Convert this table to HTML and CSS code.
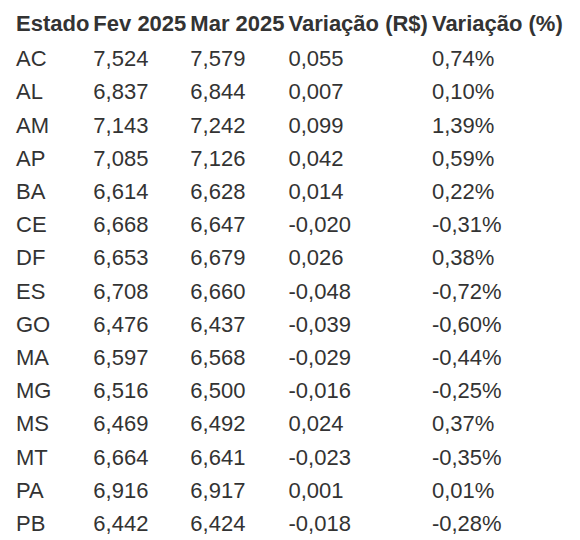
FILE: index.html
```html
<!DOCTYPE html>
<html lang="pt-BR">
<head>
    <meta charset="UTF-8">
    <meta name="viewport" content="width=device-width, initial-scale=1.0">
    <title>Preço médio por estado</title>
    <link rel="stylesheet" href="styles.css">
</head>
<body>
    <table class="price-table">
        <thead>
            <tr>
                <th>Estado</th>
                <th>Fev 2025</th>
                <th>Mar 2025</th>
                <th>Variação (R$)</th>
                <th>Variação (%)</th>
            </tr>
        </thead>
        <tbody>
            <tr><td>AC</td><td>7,524</td><td>7,579</td><td>0,055</td><td>0,74%</td></tr>
            <tr><td>AL</td><td>6,837</td><td>6,844</td><td>0,007</td><td>0,10%</td></tr>
            <tr><td>AM</td><td>7,143</td><td>7,242</td><td>0,099</td><td>1,39%</td></tr>
            <tr><td>AP</td><td>7,085</td><td>7,126</td><td>0,042</td><td>0,59%</td></tr>
            <tr><td>BA</td><td>6,614</td><td>6,628</td><td>0,014</td><td>0,22%</td></tr>
            <tr><td>CE</td><td>6,668</td><td>6,647</td><td>-0,020</td><td>-0,31%</td></tr>
            <tr><td>DF</td><td>6,653</td><td>6,679</td><td>0,026</td><td>0,38%</td></tr>
            <tr><td>ES</td><td>6,708</td><td>6,660</td><td>-0,048</td><td>-0,72%</td></tr>
            <tr><td>GO</td><td>6,476</td><td>6,437</td><td>-0,039</td><td>-0,60%</td></tr>
            <tr><td>MA</td><td>6,597</td><td>6,568</td><td>-0,029</td><td>-0,44%</td></tr>
            <tr><td>MG</td><td>6,516</td><td>6,500</td><td>-0,016</td><td>-0,25%</td></tr>
            <tr><td>MS</td><td>6,469</td><td>6,492</td><td>0,024</td><td>0,37%</td></tr>
            <tr><td>MT</td><td>6,664</td><td>6,641</td><td>-0,023</td><td>-0,35%</td></tr>
            <tr><td>PA</td><td>6,916</td><td>6,917</td><td>0,001</td><td>0,01%</td></tr>
            <tr><td>PB</td><td>6,442</td><td>6,424</td><td>-0,018</td><td>-0,28%</td></tr>
        </tbody>
    </table>
</body>
</html>
```

FILE: styles.css
```css
body {
    margin: 6px 0 0 13px;
    background: #fff;
    color: #333;
    font-family: "Liberation Sans", Arial, sans-serif;
    font-size: 22px;
}
.price-table {
    border-collapse: separate;
    border-spacing: 2px;
}
.price-table th,
.price-table td {
    padding: 0 1px;
    line-height: 31.2px;
    text-align: left;
    white-space: nowrap;
}
.price-table th {
    font-weight: bold;
    padding-bottom: 2px;
}
```
